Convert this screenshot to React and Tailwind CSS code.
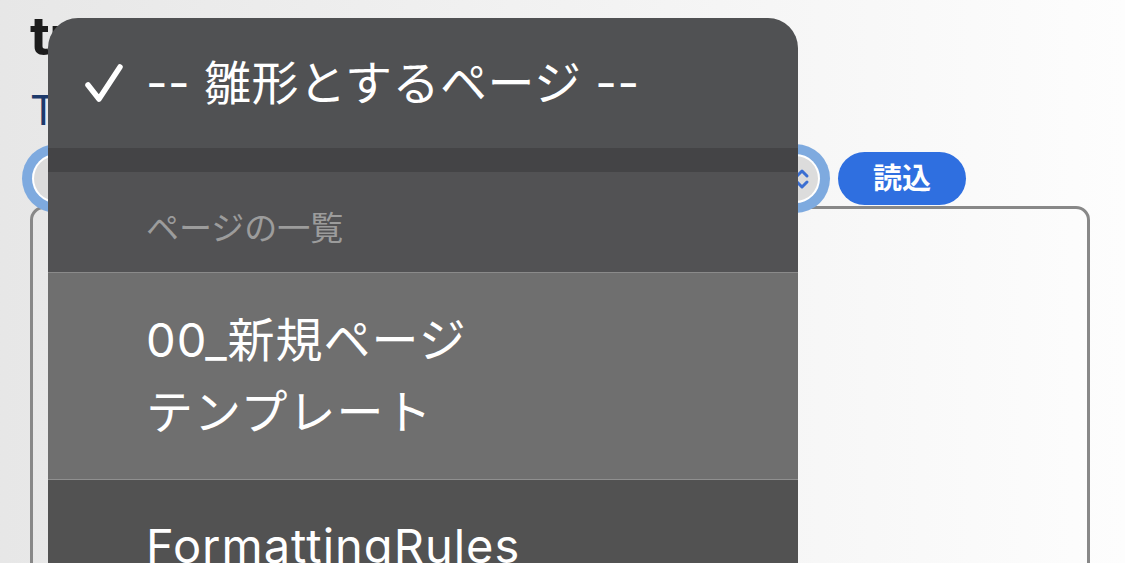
import React from "react";

const font = { fontFamily: 'Inter, "Noto Sans CJK JP", sans-serif' };

export default function App() {
  return (
    <div
      className="relative w-[1125px] h-[563px] overflow-hidden bg-linear-to-r from-[#e7e7e7] to-[#fdfdfd]"
      style={font}
    >
      <div className="flex flex-col pl-[30px] pr-[35px] pt-[6px]">
        <h1 className="text-[54px] leading-[60px] font-bold text-[#1c1c1c] tracking-[-0.5px]">tryout page</h1>
        <a className="mt-[20px] text-[41px] leading-[48px] text-[#1d3a6b]">TiddlyWiki</a>
        <div className="mt-[18px] flex items-center gap-[20px] ml-[4px]">
          <div className="relative w-[784px] h-[45px] rounded-full bg-[#dcdcdc] ring-[10px] ring-[#7eaadf] ring-offset-2 ring-offset-white">
            <svg className="absolute right-[8px] top-[11px]" width="16" height="24" viewBox="0 0 16 24" fill="none" stroke="#3b6fd2" strokeWidth="3" strokeLinecap="round" strokeLinejoin="round">
              <path d="M3 9l5-5 5 5M3 15l5 5 5-5" />
            </svg>
          </div>
          <button className="w-[128px] h-[53px] rounded-full bg-[#2f6fe0] text-white text-[29px] font-bold leading-none">
            読込
          </button>
        </div>
        <div className="mt-[1px] h-[400px] rounded-[14px] border-[3px] border-[#888888]" />
      </div>

      <div className="absolute left-[48px] top-[18px] w-[750px] h-[600px] rounded-t-[30px] overflow-hidden bg-[#505153] text-white">
        <div className="h-[130px] flex items-center">
          <svg className="ml-[37px]" width="38" height="40" viewBox="0 0 38 40" fill="none" stroke="white" strokeWidth="5.5" strokeLinecap="round" strokeLinejoin="round">
            <path d="M3 22l11 14L35 4" />
          </svg>
          <span className="ml-[23px] text-[47px] leading-[60px] tracking-[0.5px]">-- 雛形とするページ --</span>
        </div>
        <div className="h-[24px] bg-[#444446]" />
        <div className="h-[101px] bg-[#525254] flex items-center pl-[98px] pt-[12px] border-b border-[#8a8a8a]">
          <span className="text-[33px] leading-[40px] text-[#9c9c9c]">ページの一覧</span>
        </div>
        <div className="h-[207px] bg-[#6f6f6f] flex flex-col justify-center pl-[98px] border-b border-[#8f8f8f]">
          <span className="text-[47px] leading-[72px] tracking-[1px]">00_新規ページ</span>
          <span className="text-[47px] leading-[72px] tracking-[1px]">テンプレート</span>
        </div>
        <div className="h-[200px] bg-[#525252] pl-[98px] pt-[30px]">
          <span className="text-[47px] leading-[72px] tracking-[1px]">FormattingRules</span>
        </div>
      </div>
    </div>
  );
}
